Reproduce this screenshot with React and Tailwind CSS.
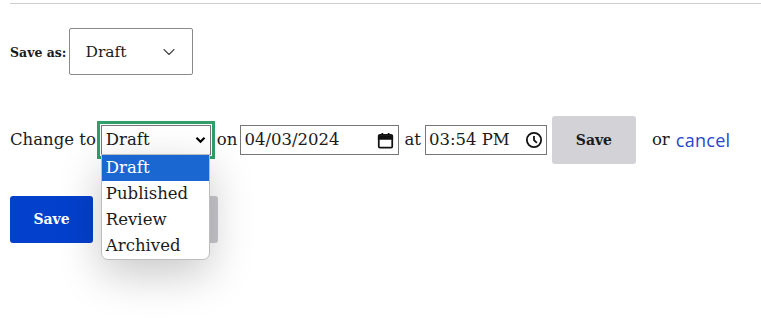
import { ChevronDown } from 'lucide-react';

const serif = { fontFamily: '"DejaVu Serif", serif' };

function CalendarIcon() {
  return (
    <svg width="19" height="19" viewBox="0 0 24 24" fill="none" stroke="#111" strokeWidth="2.2">
      <rect x="3.5" y="5" width="17" height="16" rx="1.5" />
      <path d="M3.5 6.5h17v3.5h-17z" fill="#111" />
      <path d="M8 2.5v3M16 2.5v3" />
    </svg>
  );
}

function ClockIcon() {
  return (
    <svg width="18" height="18" viewBox="0 0 24 24" fill="none" stroke="#111" strokeWidth="2.4">
      <circle cx="12" cy="12" r="9.5" />
      <path d="M12 6.5v5.8l3.8 3.6" />
    </svg>
  );
}

export default function App() {
  return (
    <div className="relative w-[761px] h-[321px] bg-white text-[#1b1b1b] overflow-hidden" style={serif}>
      <div className="ml-[10px] mt-[3px] h-px bg-[#cfcfcf]" />

      {/* Save as */}
      <div className="flex items-center ml-[10px] mt-[24px] gap-[3px]">
        <span className="text-[12.5px] font-bold mt-[3px]">Save as:</span>
        <div className="w-[124px] h-[47px] border border-[#8a8a8a] rounded-[2px] flex items-center justify-between pl-[15px] pr-[13px]">
          <span className="text-[15.5px] mt-[2px]">Draft</span>
          <ChevronDown size={20} strokeWidth={1.3} className="text-[#444]" />
        </div>
      </div>

      {/* Change to */}
      <div className="flex items-center ml-[10px] mt-[41px] h-[48px] text-[16.5px]">
        <span>Change to</span>
        <div className="relative ml-[1px] border-[3px] border-[#2f9e6b] p-px">
          <div className="w-[110px] h-[30px] border border-[#767676] flex items-center justify-between pl-[4px] pr-[4px] bg-white">
            <span>Draft</span>
            <svg width="11" height="8" viewBox="0 0 11 8" fill="none" stroke="#000" strokeWidth="2.2">
              <path d="M1.5 1.8l4 4 4-4" />
            </svg>
          </div>
          <div className="absolute left-[1px] top-[30px] z-10 w-[109px] bg-white border border-[#bdbdbd] rounded-b-[7px] shadow-[0_14px_44px_rgba(0,0,0,0.22)] overflow-hidden">
            <div className="h-[26px] leading-[26px] pl-[4px] bg-[#1a67d2] text-white">Draft</div>
            <div className="h-[26px] leading-[26px] pl-[4px]">Published</div>
            <div className="h-[26px] leading-[26px] pl-[4px]">Review</div>
            <div className="h-[26px] leading-[26px] pl-[4px]">Archived</div>
          </div>
        </div>
        <span className="ml-[2px]">on</span>
        <div className="ml-[3px] w-[159px] h-[30px] border border-[#767676] flex items-center justify-between pl-[3px] pr-[3px]">
          <span>04/03/2024</span>
          <CalendarIcon />
        </div>
        <span className="ml-[5px]">at</span>
        <div className="ml-[4px] w-[122px] h-[30px] border border-[#767676] flex items-center justify-between pl-[3px] pr-[3px]">
          <span className="whitespace-pre">03:54 PM</span>
          <ClockIcon />
        </div>
        <button className="ml-[5px] w-[84px] h-[48px] bg-[#d2d2d7] rounded-[3px] font-bold text-[14px] text-[#1b1b1b]" style={serif}>
          Save
        </button>
        <span className="ml-[16px]">or</span>
        <span className="ml-[6px] text-[#2a46cc] text-[18px] tracking-[0.3px]" style={{ fontFamily: '"Open Sans", sans-serif' }}>
          cancel
        </span>
      </div>

      {/* Bottom buttons */}
      <div className="flex items-center ml-[10px] mt-[32px] gap-[8px]">
        <button className="w-[83px] h-[47px] bg-[#0340cc] rounded-[3px] text-white font-bold text-[14px]" style={serif}>
          Save
        </button>
        <button className="w-[117px] h-[47px] bg-[#c9c9cf] rounded-[3px]" aria-label="Preview" />
      </div>
    </div>
  );
}
